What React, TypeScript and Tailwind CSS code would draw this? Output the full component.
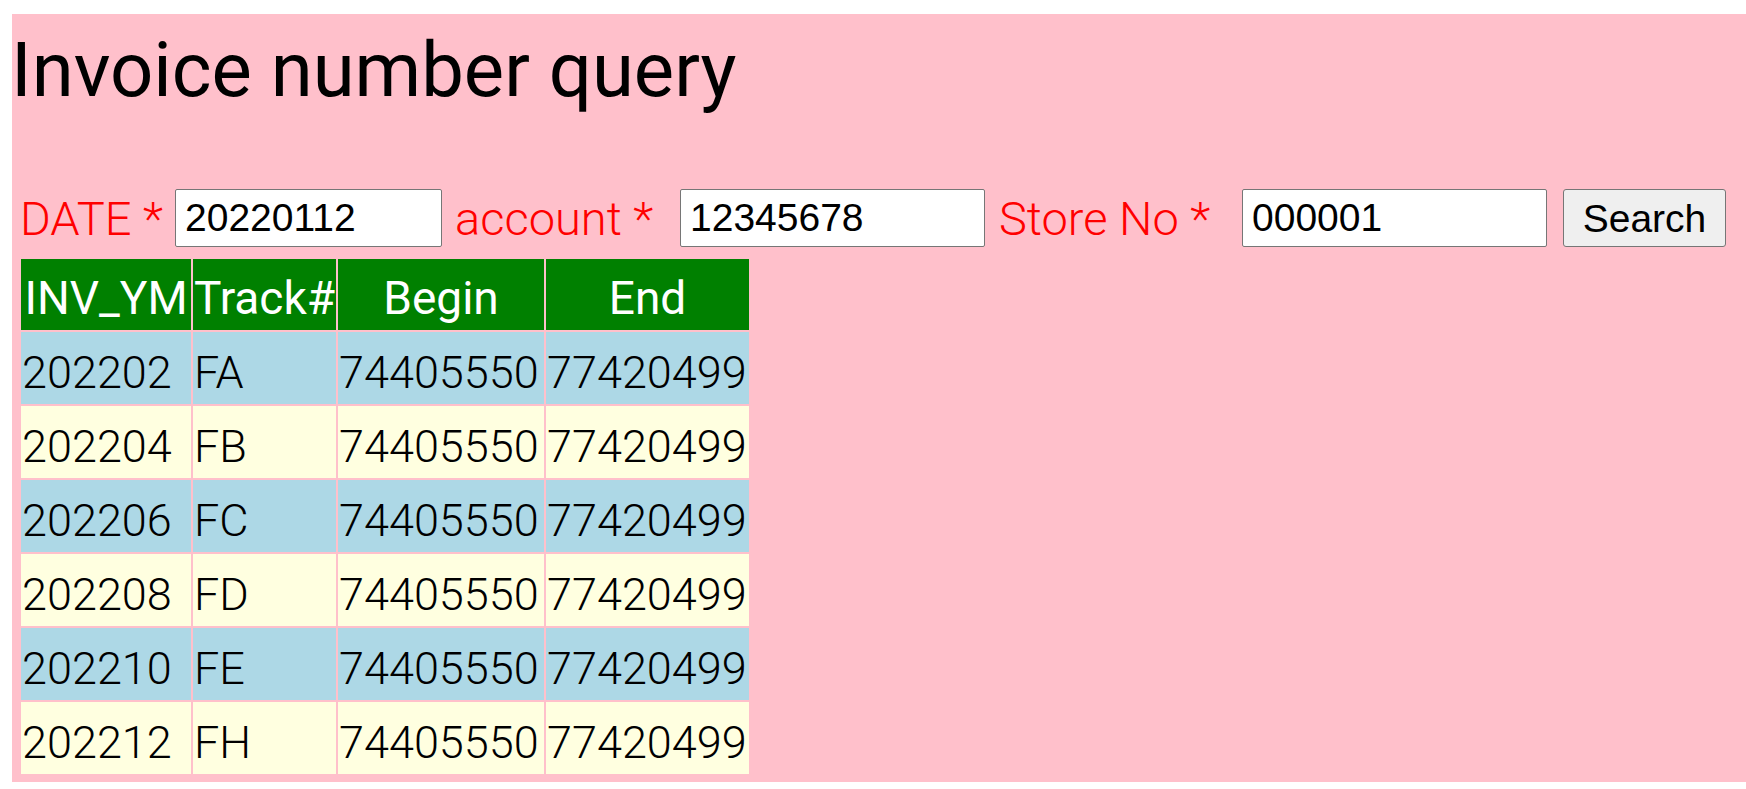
const rows = [
  { ym: "202202", track: "FA", begin: "74405550", end: "77420499" },
  { ym: "202204", track: "FB", begin: "74405550", end: "77420499" },
  { ym: "202206", track: "FC", begin: "74405550", end: "77420499" },
  { ym: "202208", track: "FD", begin: "74405550", end: "77420499" },
  { ym: "202210", track: "FE", begin: "74405550", end: "77420499" },
  { ym: "202212", track: "FH", begin: "74405550", end: "77420499" },
];

const inputCls =
  "h-[58px] shrink-0 rounded-[2px] border border-[#767676] bg-white px-[9px] font-['Liberation_Sans',Arial,sans-serif] text-[39px] font-normal text-black";

const App = () => {
  return (
    <div className="ml-[12px] mt-[14px] bg-[#ffc0cb] pl-[7px] pt-[18px] pb-[6px] font-['Roboto',sans-serif]">
      <h1 className="-ml-[8px] h-[76px] text-[76px] leading-none font-normal text-black">
        Invoice number query
      </h1>

      {/* query form */}
      <div className="mt-[81px] flex items-center font-light text-[47px] leading-[47px] text-[#ff0000]">
        <span className="w-[156px] shrink-0 pl-[1px]">DATE *</span>
        <input defaultValue="20220112" className={`w-[267px] ${inputCls}`} />
        <span className="w-[238px] shrink-0 pl-[13px]">account *</span>
        <input defaultValue="12345678" className={`w-[305px] ${inputCls}`} />
        <span className="w-[257px] shrink-0 pl-[14px]">Store No *</span>
        <input defaultValue="000001" className={`w-[305px] ${inputCls}`} />
        <button
          type="button"
          className="ml-[16px] h-[58px] w-[163px] shrink-0 rounded-[3px] border border-[#767676] bg-[#efefef] font-['Liberation_Sans',Arial,sans-serif] text-[39px] font-normal text-black"
        >
          Search
        </button>
      </div>

      {/* result table */}
      <table className="mt-[10px] border-separate border-spacing-[2px]">
        <thead>
          <tr className="h-[71px] bg-[#008000] text-[46px] leading-[46px] text-white">
            <th className="w-[170px] p-0 pt-[6px] text-center font-normal">INV_YM</th>
            <th className="w-[143px] p-0 pt-[6px] text-center font-normal">Track#</th>
            <th className="w-[206px] p-0 pt-[6px] text-center font-normal">Begin</th>
            <th className="w-[203px] p-0 pt-[6px] text-center font-normal">End</th>
          </tr>
        </thead>
        <tbody>
          {rows.map((r, i) => (
            <tr
              key={r.ym}
              className={`h-[72px] text-[45px] leading-[45px] font-light text-black ${
                i % 2 === 0 ? "bg-[#add8e6]" : "bg-[#ffffe0]"
              }`}
            >
              <td className="p-0 pl-[1px] pt-[9px]">{r.ym}</td>
              <td className="p-0 pl-[1px] pt-[9px]">{r.track}</td>
              <td className="p-0 pl-[1px] pt-[9px]">{r.begin}</td>
              <td className="p-0 pl-[1px] pt-[9px]">{r.end}</td>
            </tr>
          ))}
        </tbody>
      </table>
    </div>
  );
};

export default App;
